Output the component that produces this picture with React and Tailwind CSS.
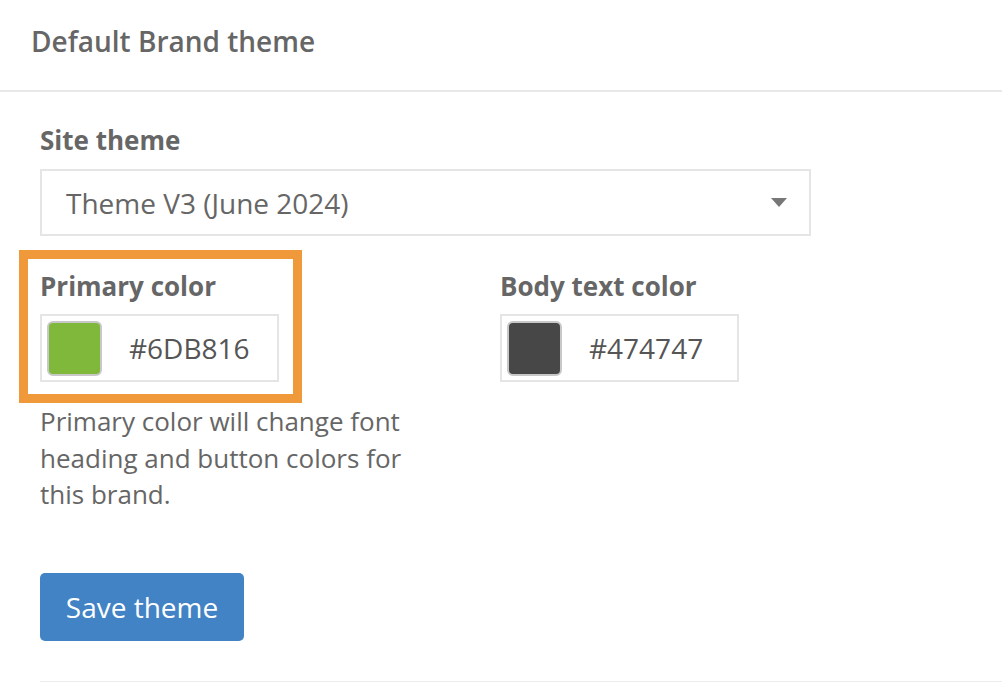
import React from 'react';

const ColorField = ({ label, swatch, value }) => (
  <div>
    <div className="text-[26px] leading-[32px] font-bold text-[#666]">{label}</div>
    <div className="mt-[12px] w-[239px] h-[68px] border-2 border-[#e5e5e5] flex items-center pl-[5px]">
      <div className={`w-[55px] h-[55px] rounded-[6px] border-2 border-[#c8c8c8] ${swatch}`} />
      <span className="ml-[27px] text-[28px] text-[#555]">{value}</span>
    </div>
  </div>
);

const App = () => {
  return (
    <div className="w-[1002px] h-[682px] bg-white overflow-hidden" style={{ fontFamily: '"Open Sans", "Liberation Sans", sans-serif' }}>
      {/* Header */}
      <div className="h-[92px] border-b-2 border-[#e8e8e8] flex items-center px-[31px] pb-[8px]">
        <h2 className="text-[28px] font-semibold text-[#666]">Default Brand theme</h2>
      </div>

      <div className="pl-[40px]">
        {/* Site theme */}
        <div className="mt-[32px] text-[26px] leading-[32px] font-bold text-[#666]">Site theme</div>
        <div className="mt-[13px] w-[771px] h-[67px] border-2 border-[#e5e5e5] flex items-center justify-between pl-[24px] pr-[22px]">
          <span className="text-[28px] text-[#666]">Theme V3 (June 2024)</span>
          <svg width="16" height="10" viewBox="0 0 16 10">
            <polygon points="0,0 16,0 8,9" fill="#777" />
          </svg>
        </div>

        {/* Colors */}
        <div className="mt-[34px] flex gap-[221px]">
          <div className="relative">
            <div className="absolute left-[-21px] top-[-20px] w-[283px] h-[153px] border-[9px] border-[#f0993a] pointer-events-none" />
            <ColorField label="Primary color" swatch="bg-[#7fb83a]" value="#6DB816" />
          </div>
          <ColorField label="Body text color" swatch="bg-[#474747]" value="#474747" />
        </div>

        <p className="mt-[21px] w-[385px] text-[26px] leading-[36.5px] text-[#666]">
          Primary color will change font heading and button colors for this brand.
        </p>

        <button className="mt-[60px] w-[204px] h-[68px] rounded-[5px] bg-[#4183c4] text-white text-[28px]">
          Save theme
        </button>

        <div className="mt-[40px] border-t-2 border-[#ececec]" />
      </div>
    </div>
  );
};

export default App;
